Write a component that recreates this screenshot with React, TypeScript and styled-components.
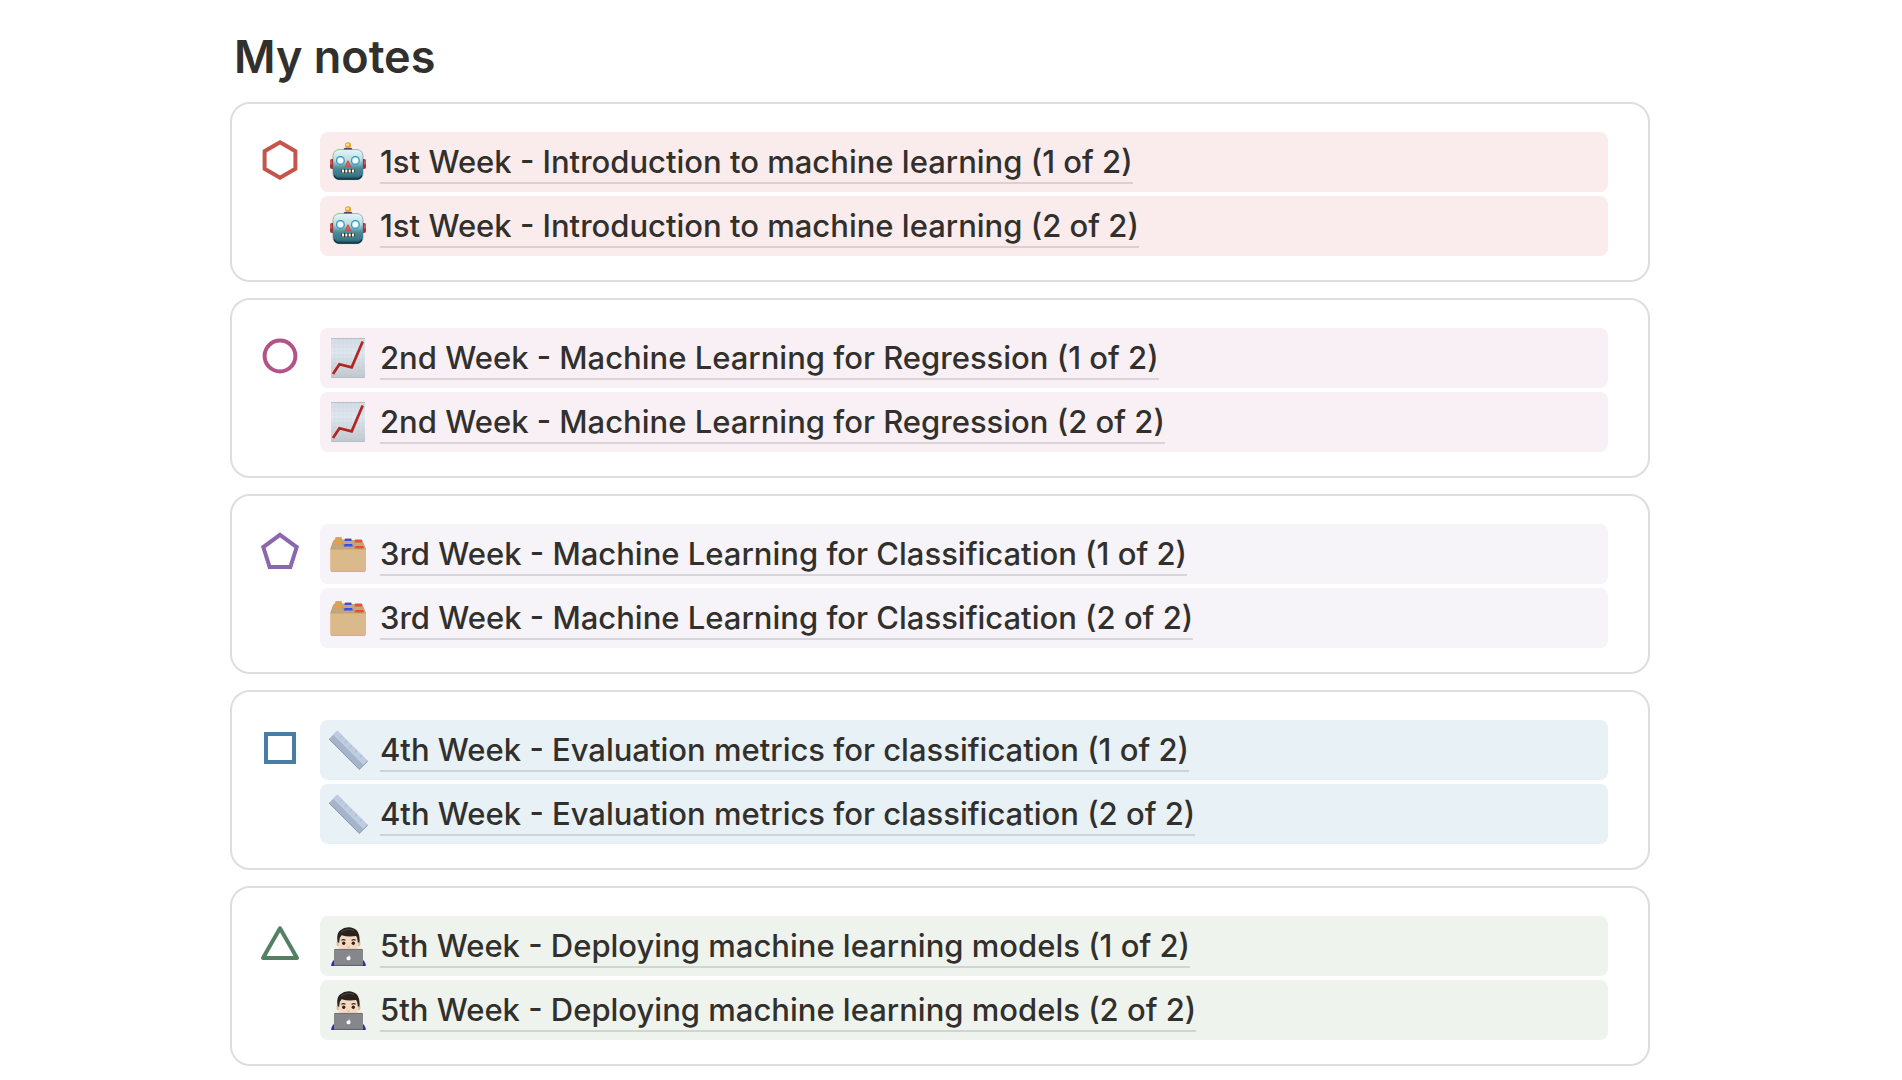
import React from "react";
import styled, { createGlobalStyle } from "styled-components";

const GlobalStyle = createGlobalStyle`
  *, *::before, *::after { box-sizing: border-box; }
  body {
    margin: 0;
    background: #fff;
    color: #32302c;
    font-family: Inter, "Liberation Sans", sans-serif;
  }
`;

const Page = styled.main`
  padding: 28px 252px 16px 230px;
`;

const Title = styled.h1`
  margin: 0 0 16px;
  padding: 0 4px;
  font-size: 45px;
  line-height: 58px;
  font-weight: 600;
`;

const Cards = styled.div`
  display: flex;
  flex-direction: column;
  gap: 16px;
`;

const Card = styled.section`
  display: flex;
  align-items: flex-start;
  gap: 20px;
  padding: 28px 40px 24px 28px;
  border: 2px solid #dedede;
  border-radius: 20px;
`;

const Badge = styled.svg`
  flex: none;
  width: 40px;
  height: 40px;
  margin-top: 8px;
  fill: none;
  stroke-width: 4px;
`;

const Rows = styled.ul`
  flex: 1;
  min-width: 0;
  display: flex;
  flex-direction: column;
  gap: 4px;
  margin: 0;
  padding: 0;
  list-style: none;
`;

const Row = styled.li<{ $tint: string }>`
  display: flex;
  align-items: center;
  gap: 12px;
  min-height: 60px;
  padding: 8px;
  border-radius: 8px;
  background: ${(p) => p.$tint};
`;

const Emoji = styled.svg`
  flex: none;
  width: 40px;
  height: 40px;
`;

const NoteLink = styled.a`
  padding-top: 2px;
  border-bottom: 2px solid rgba(50, 48, 44, 0.15);
  color: inherit;
  font-size: 31px;
  line-height: 40px;
  font-weight: 500;
  text-decoration: none;
`;

const Robot = () => (
  <Emoji viewBox="0 0 40 40" aria-hidden="true">
    <defs>
      <linearGradient id="robotHead" x1="0" y1="0" x2="0" y2="1">
        <stop offset="0" stopColor="#e6f7f6" />
        <stop offset="0.35" stopColor="#b9dcde" />
        <stop offset="0.62" stopColor="#4c8a98" />
        <stop offset="0.88" stopColor="#3b7585" />
        <stop offset="1" stopColor="#0d3a4c" />
      </linearGradient>
    </defs>
    <rect x="2" y="17" width="5" height="10" rx="2" fill="#a82f36" />
    <rect x="33" y="17" width="5" height="10" rx="2" fill="#a82f36" />
    <path d="M3 18.5v4M37 18.5v4" stroke="#e07a78" strokeWidth="1.2" />
    <ellipse cx="20" cy="7.2" rx="4.3" ry="1.8" fill="#4c3872" />
    <circle cx="20" cy="3.2" r="3" fill="#eda031" />
    <ellipse cx="19.6" cy="2.8" rx="1.7" ry="1.2" fill="#ffe476" />
    <rect x="5" y="7.6" width="30" height="30" rx="6" fill="url(#robotHead)" stroke="#3f7280" strokeOpacity="0.6" strokeWidth="0.8" />
    <path d="M6.5 33.5q1 3.6 5 3.6h17q4 0 5-3.6" fill="none" stroke="#0c3547" strokeWidth="1.2" />
    {[12.4, 27.4].map((x) => (
      <g key={x}>
        <circle cx={x} cy="18.4" r="4.4" fill="#2e8fb9" />
        <circle cx={x} cy="18.4" r="3.5" fill="#94d8f0" />
        <circle cx={x} cy="18.4" r="2.7" fill="#fff" />
      </g>
    ))}
    <path d="M20 18.6l3 6.2h-6z" fill="#dc5a52" stroke="#b64845" strokeWidth="0.6" />
    <rect x="13" y="27" width="14" height="4" rx="1.8" fill="#24343b" />
    <path d="M15 27.4v3.2M18.3 27.4v3.2M21.7 27.4v3.2M25 27.4v3.2" stroke="#fff1d9" strokeWidth="2.1" />
  </Emoji>
);

const Chart = () => (
  <Emoji viewBox="0 0 40 40" aria-hidden="true">
    <defs>
      <linearGradient id="chartPaper" x1="0" y1="0" x2="0" y2="1">
        <stop offset="0" stopColor="#d2dce4" />
        <stop offset="0.35" stopColor="#e0e8f0" />
        <stop offset="1" stopColor="#c2c9ce" />
      </linearGradient>
    </defs>
    <rect x="3" y="0" width="34" height="40" fill="url(#chartPaper)" />
    <path d="M7 1v38M11 1v38M15 1v38M19 1v38M23 1v38M27 1v38M31 1v38M35 1v38M3 5h34M3 9h34M3 13h34M3 17h34M3 21h34M3 25h34M3 29h34M3 33h34M3 37h34" stroke="#b8cbdc" strokeOpacity="0.25" strokeWidth="0.5" />
    <path d="M3 .5h34M3 39.6h34" stroke="#b0b9c0" strokeWidth="0.8" />
    <path d="M5 36l6.4-9.8 12.3 3.2L34.7 3.5" fill="none" stroke="#b3251e" strokeWidth="2.7" />
  </Emoji>
);

const Dividers = () => (
  <Emoji viewBox="0 0 40 40" aria-hidden="true">
    <path d="M7 5l1-1.8h5.4l1 2.3h2l.8-1h6l1 1.4h2.3l.8-.7h6.5l1 2L38 15H2.2L5 7z" fill="#c6a577" />
    <path d="M5 9.6h9.5l1 2h9.5l1.3 2H36" fill="none" stroke="#a88d68" strokeWidth="0.8" />
    <path d="M7.6 3.2h5.8l.6 1.8H7z" fill="#f09b49" />
    <path d="M5.8 7.8h7.5l.7 2.2H4.8z" fill="#f09b49" />
    <path d="M17 4.8h6l.6 2.2h-7.2z" fill="#344cff" />
    <path d="M16.5 10h7.6l.7 2.6h-9z" fill="#344cff" />
    <path d="M27.2 6h6.4l.7 2.6h-7.8z" fill="#ec4840" />
    <path d="M27.5 12h7.8l.8 2.7h-9.3z" fill="#ec4840" />
    <path d="M2.2 14.7H38V36q0 1.7-1.7 1.7H3.9q-1.7 0-1.7-1.7z" fill="#dab98a" />
    <path d="M2.5 15H37.8" stroke="#b99563" strokeWidth="0.6" />
    <path d="M3 37.3h34" stroke="#c8a672" strokeWidth="0.8" />
  </Emoji>
);

const Ruler = () => (
  <Emoji viewBox="0 0 40 40" aria-hidden="true">
    <path d="M9.3.7l30.4 30.4-8.4 8.3L1 9z" fill="#a6b3c9" />
    <path d="M9.3.7l30.4 30.4-4.1 4.1L5.2 4.8z" fill="#bfcde0" />
    <path d="M1 9l30.3 30.4 8.4-8.3" fill="none" stroke="#8492aa" strokeWidth="0.9" />
    <path d="M14 5.400l-2.300 2.300M19 10.400l-2.300 2.300M24 15.400l-2.300 2.300M29 20.400l-2.300 2.300M34 25.400l-2.300 2.300" stroke="#94a6bf" strokeWidth="0.7" />
  </Emoji>
);

const Technologist = () => (
  <Emoji viewBox="0 0 40 40" aria-hidden="true">
    <path d="M3.2 40q.4-5.5 4.5-7h25.6q4 1.5 4.5 7z" fill="#282bbc" />
    <ellipse cx="10.3" cy="17.5" rx="1.8" ry="3" fill="#e6bd9c" />
    <ellipse cx="30.7" cy="17.5" rx="1.8" ry="3" fill="#e6bd9c" />
    <path d="M11 11q9-6 19 0v8q0 9-9.5 9T11 19z" fill="#f5d9c1" />
    <path d="M9.7 16.5Q8 8 12 4.6 18-.6 26 2.4q6.700 3 5.400 14.100h-1.600q.2-4-1.700-6.400-7.600 1.300-14.500-.8-2.600 2.500-2.300 7.200z" fill="#29231f" />
    <path d="M13 6q6-4 13-1.500" fill="none" stroke="#554b43" strokeWidth="0.9" />
    <path d="M13.3 14.3q2-1.200 4.200 0M23.500 14.300q2.200-1.200 4.200 0" fill="none" stroke="#3c2b22" strokeWidth="1.2" />
    <circle cx="15.7" cy="17.2" r="1.7" fill="#37251c" />
    <circle cx="25.3" cy="17.2" r="1.7" fill="#37251c" />
    <path d="M19.4 20.800q1.100.7 2.200 0" fill="none" stroke="#d7a586" strokeWidth="0.9" />
    <path d="M7 23h27q1 0 1 1v15.700H6V24q0-1 1-1z" fill="#85878a" />
    <path d="M6.5 23.400h28" stroke="#66696c" strokeWidth="0.7" />
    <path d="M6 39.400h29" stroke="#5e6063" strokeWidth="0.8" />
    <path d="M20.600 30.500q1.300-.6 2 .2-.9 1.100.1 2.100-.8 1.700-2.100 1.400-1.900.4-2.200-1.900.2-2.100 2.200-1.800zM20.600 30q0-1.200 1.100-1.400 0 1.200-1.100 1.400z" fill="#fff" />
  </Emoji>
);

const weeks = [
  {
    title: "1st Week - Introduction to machine learning",
    tint: "#faecec",
    color: "#c4554d",
    shape: <path d="M20 2.300l15.400 8.900v17.600L20 37.700 4.600 28.800V11.200z" />,
    Icon: Robot,
  },
  {
    title: "2nd Week - Machine Learning for Regression",
    tint: "#f9f0f5",
    color: "#b35488",
    shape: <circle cx="20" cy="20" r="15.400" />,
    Icon: Chart,
  },
  {
    title: "3rd Week - Machine Learning for Classification",
    tint: "#f6f3f9",
    color: "#8b67ab",
    shape: <path d="M20 2.800l16.700 12.300L30.400 35H9.600L3.300 15.100z" />,
    Icon: Dividers,
  },
  {
    title: "4th Week - Evaluation metrics for classification",
    tint: "#e8f1f6",
    color: "#487ca5",
    shape: <path d="M6 6h28v28H6z" />,
    Icon: Ruler,
  },
  {
    title: "5th Week - Deploying machine learning models",
    tint: "#eef3ed",
    color: "#548164",
    shape: <path d="M20 4.300L37 34H3z" strokeLinejoin="round" />,
    Icon: Technologist,
  },
];

export default function App() {
  return (
    <>
      <GlobalStyle />
      <Page>
        <Title>My notes</Title>
        <Cards>
          {weeks.map(({ title, tint, color, shape, Icon }) => (
            <Card key={title}>
              <Badge viewBox="0 0 40 40" stroke={color} aria-hidden="true">
                {shape}
              </Badge>
              <Rows>
                {[1, 2].map((part) => (
                  <Row key={part} $tint={tint}>
                    <Icon />
                    <NoteLink href="#">{`${title} (${part} of 2)`}</NoteLink>
                  </Row>
                ))}
              </Rows>
            </Card>
          ))}
        </Cards>
      </Page>
    </>
  );
}
